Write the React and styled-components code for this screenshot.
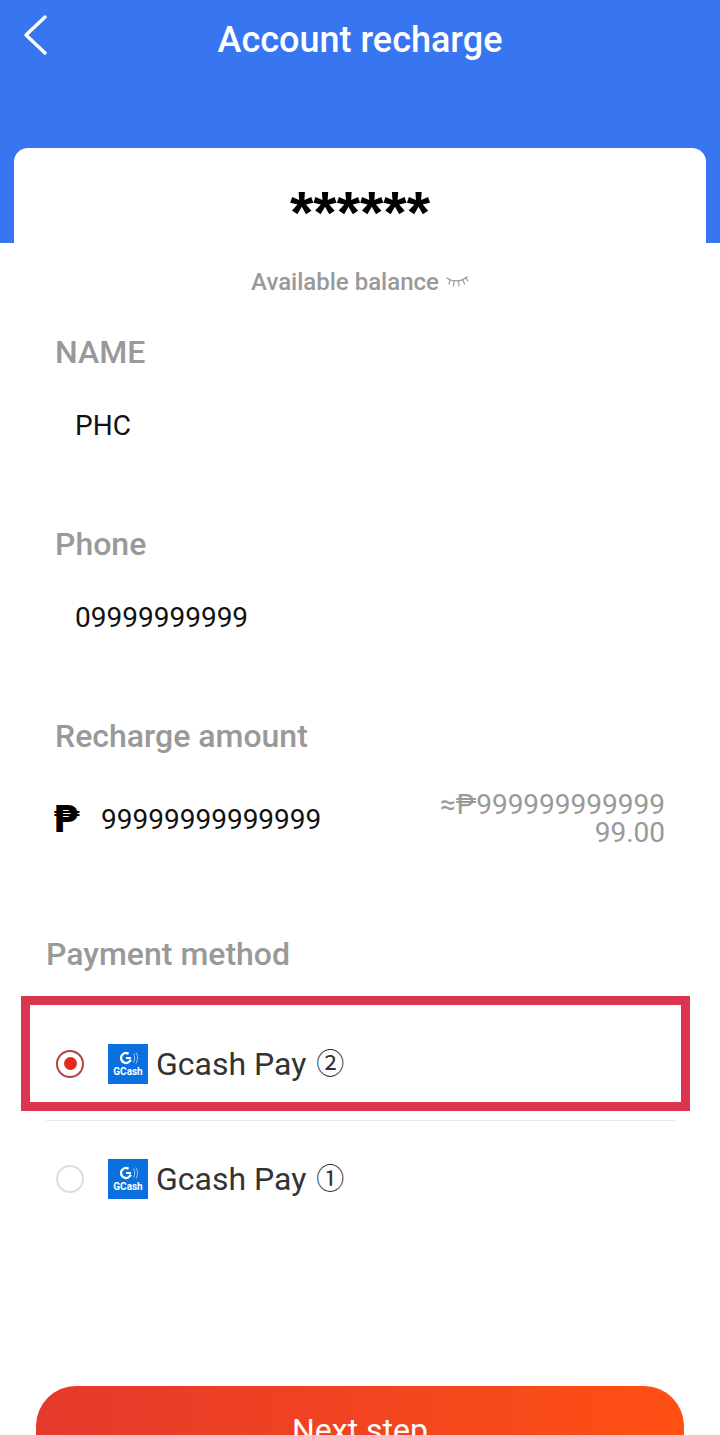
import React from "react";
import styled, { createGlobalStyle } from "styled-components";

const Global = createGlobalStyle`
  html, body { margin: 0; padding: 0; background: #fff; }
  body { font-family: Roboto, "Noto Sans", sans-serif; }
  * { box-sizing: border-box; }
`;

const Page = styled.div`
  width: 720px;
  height: 1435px;
  overflow: hidden;
  background: #fff;
`;
const Hero = styled.header`
  height: 243px;
  background: #3875f0;
`;
const TopBar = styled.div`
  height: 78px;
  padding-top: 2px;
  display: flex;
  align-items: center;
  justify-content: center;
  position: relative;
`;
const BackButton = styled.button`
  position: absolute;
  left: 15px;
  top: 10px;
  width: 40px;
  height: 50px;
  padding: 0;
  border: 0;
  background: none;
  display: flex;
  align-items: center;
  justify-content: center;
`;
const Title = styled.h1`
  margin: 0;
  font-size: 36px;
  font-weight: 500;
  color: #fff;
  line-height: 76px;
`;
const Card = styled.section`
  margin: -95px 14px 0;
  height: 190px;
  background: #fff;
  border-radius: 14px 14px 0 0;
  display: flex;
  flex-direction: column;
  align-items: center;
`;
const Stars = styled.div`
  margin-top: 35px;
  font-family: "Liberation Sans", sans-serif;
  font-size: 60px;
  line-height: 60px;
  font-weight: 700;
  color: #000;
  height: 60px;
`;
const BalanceRow = styled.div`
  margin-top: 21px;
  display: flex;
  align-items: center;
  gap: 6px;
  font-size: 24px;
  font-weight: 500;
  color: #999;
  line-height: 36px;
`;
const Fields = styled.div`
  margin-top: -8px;
`;
const Field = styled.div`
  height: 192px;
  padding: 0 55px;
`;
const Label = styled.div`
  font-size: 32px;
  font-weight: 500;
  color: #999;
  line-height: 44px;
`;
const Value = styled.div`
  margin-top: 30px;
  padding-left: 20px;
  font-size: 28px;
  color: #111;
  line-height: 44px;
`;
const AmountRow = styled.div`
  margin-top: 39px;
  display: flex;
  align-items: center;
  justify-content: space-between;
  height: 44px;
`;
const Peso = styled.span`
  margin-left: -2px;
  font-family: "DejaVu Sans", sans-serif;
  font-size: 38px;
  font-weight: 700;
  color: #000;
  width: 48px;
  flex: none;
`;
const AmountValue = styled.span`
  flex: 1;
  font-size: 28px;
  color: #111;
`;
const Converted = styled.div`
  width: 226px;
  flex: none;
  text-align: right;
  word-break: break-all;
  font-size: 28px;
  line-height: 28px;
  color: #999;
`;
const Methods = styled.div`
  padding: 0 45px 0 46px;
  margin-top: 26px;
`;
const MethodsTitle = styled.div`
  margin: 0 0 31px;
  font-size: 32px;
  font-weight: 500;
  color: #999;
  line-height: 44px;
`;
const MethodRow = styled.div`
  height: ${(p) => (p.$divider ? "114px" : "115px")};
  display: flex;
  align-items: center;
  padding-left: 10px;
  position: relative;
  border-bottom: ${(p) => (p.$divider ? "1px solid #e8e8e8" : "0")};
`;
const Radio = styled.span`
  width: 28px;
  height: 28px;
  border-radius: 50%;
  border: 2px solid ${(p) => (p.$on ? "#b5453c" : "#ddd")};
  display: flex;
  align-items: center;
  justify-content: center;
  flex: none;
  &::after {
    content: "";
    display: ${(p) => (p.$on ? "block" : "none")};
    width: 13px;
    height: 13px;
    border-radius: 50%;
    background: #e5281c;
  }
`;
const Logo = styled.span`
  margin-left: 24px;
  width: 40px;
  height: 40px;
  background: #0a70e0;
  color: #fff;
  display: flex;
  flex-direction: column;
  align-items: center;
  justify-content: center;
  flex: none;
`;
const LogoMark = styled.svg`
  display: block;
`;
const LogoText = styled.span`
  font-size: 10px;
  font-weight: 700;
  line-height: 11px;
`;
const MethodName = styled.span`
  margin-left: 8px;
  font-size: 32px;
  color: #333;
`;
const Badge = styled.span`
  margin: 0 0 4px 10px;
  font-family: "Noto Sans CJK SC", sans-serif;
  font-size: 28px;
  color: #333;
`;
const Highlight = styled.div`
  position: absolute;
  left: -25px;
  top: -11px;
  width: 669px;
  height: 115px;
  border: 9px solid #dc3550;
  pointer-events: none;
`;
const Footer = styled.div`
  padding-top: 150px;
`;
const NextButton = styled.button`
  display: block;
  margin: 0 auto;
  width: 648px;
  height: 88px;
  border: 0;
  border-radius: 40px;
  background: linear-gradient(90deg, #e5392c, #ff4f14);
  color: #fff;
  font-family: Roboto, sans-serif;
  font-size: 32px;
  padding: 0;
`;

const GCashLogo = () => (
  <Logo>
    <LogoMark width="22" height="16" viewBox="0 0 22 16">
      <circle cx="9" cy="8" r="5" fill="none" stroke="#fff" strokeWidth="2.4" strokeDasharray="24 7" transform="rotate(20 9 8)" />
      <path d="M9 8h5" stroke="#fff" strokeWidth="2" />
      <path d="M16.5 3.500c1.600 3 1.600 6 0 9M19 2.500c2 3.600 2 7.400 0 11" fill="none" stroke="#9cc8f5" strokeWidth="1" />
    </LogoMark>
    <LogoText>GCash</LogoText>
  </Logo>
);

export default function App() {
  return (
    <Page>
      <Global />
      <Hero>
        <TopBar>
          <BackButton aria-label="Back">
            <svg width="26" height="42" viewBox="0 0 26 42" fill="none">
              <path d="M23 3 L4 21 L23 39" stroke="#fff" strokeWidth="3.400" strokeLinecap="round" strokeLinejoin="round" />
            </svg>
          </BackButton>
          <Title>Account recharge</Title>
        </TopBar>
      </Hero>
      <Card>
        <Stars>******</Stars>
        <BalanceRow>
          Available balance
          <svg width="24" height="16" viewBox="0 0 24 16" fill="none" stroke="#999" strokeWidth="1.200" strokeLinecap="round">
            <path d="M2 4c5 4 14 4 20-1" />
            <path d="M5 6 4 10M9 7.500 8.500 12M13.500 7.500 14 12M18 6l1.500 4M21 4l2 3" />
          </svg>
        </BalanceRow>
      </Card>
      <Fields>
        <Field>
          <Label>NAME</Label>
          <Value>PHC</Value>
        </Field>
        <Field>
          <Label>Phone</Label>
          <Value>09999999999</Value>
        </Field>
        <Field>
          <Label>Recharge amount</Label>
          <AmountRow>
            <Peso>₱</Peso>
            <AmountValue>99999999999999</AmountValue>
            <Converted>≈₱99999999999999.00</Converted>
          </AmountRow>
        </Field>
      </Fields>
      <Methods>
        <MethodsTitle>Payment method</MethodsTitle>
        <MethodRow $divider>
          <Radio $on />
          <GCashLogo />
          <MethodName>Gcash Pay</MethodName>
          <Badge>②</Badge>
          <Highlight />
        </MethodRow>
        <MethodRow>
          <Radio />
          <GCashLogo />
          <MethodName>Gcash Pay</MethodName>
          <Badge>①</Badge>
        </MethodRow>
      </Methods>
      <Footer>
        <NextButton>Next step</NextButton>
      </Footer>
    </Page>
  );
}
